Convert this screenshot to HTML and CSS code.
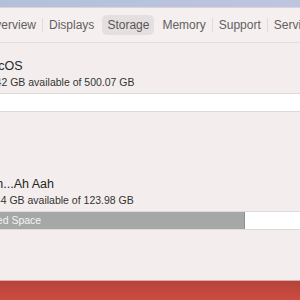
FILE: index.html
```html
<!DOCTYPE html>
<html lang="en">

<head>
  <meta charset="UTF-8" />
  <title>About This Mac - Storage</title>
  <link rel="stylesheet" href="styles.css">
</head>

<body>
  <div class="desktop-top"></div>
  <div class="window">
    <div class="toolbar">
      <ul class="tabs">
        <li class="tab">Overview</li>
        <li class="sep"></li>
        <li class="tab">Displays</li>
        <li class="sep hidden"></li>
        <li class="tab active">Storage</li>
        <li class="sep hidden"></li>
        <li class="tab">Memory</li>
        <li class="sep"></li>
        <li class="tab">Support</li>
        <li class="sep"></li>
        <li class="tab">Service</li>
      </ul>
    </div>
    <main class="content">
      <section class="disk">
        <div class="disk-name">macOS</div>
        <div class="disk-free">18.42 GB available of 500.07 GB</div>
        <div class="bar"></div>
      </section>
      <section class="disk second">
        <div class="disk-name">Shh...Ah Aah</div>
        <div class="disk-free">11.44 GB available of 123.98 GB</div>
        <div class="bar">
          <div class="used" style="width: 264px">Used Space</div>
        </div>
      </section>
    </main>
  </div>
  <div class="desktop-bottom"></div>
</body>

</html>
```

FILE: styles.css
```css
body {
  margin: 0;
  width: 300px;
  height: 300px;
  overflow: hidden;
  font-family: 'Liberation Sans', Arial, sans-serif;
  background: #c0463c;
  display: flex;
  flex-direction: column;
}

.desktop-top {
  height: 7px;
  background: linear-gradient(90deg, #b4bfd9, #bcc6de);
  border-bottom: 1px solid #d9d3dc;
}

.window {
  height: 272px;
  background: #f3eeed;
  display: flex;
  flex-direction: column;
  overflow: hidden;
}

.toolbar {
  height: 34px;
  background: #f5f0ef;
  border-bottom: 1px solid #e3dedd;
  display: flex;
  align-items: center;
}

.tabs {
  list-style: none;
  margin: 0 0 0 -19px;
  padding: 0;
  display: flex;
  align-items: center;
  white-space: nowrap;
}

.tab {
  font-size: 12px;
  color: #626060;
  padding: 0 5px;
  height: 20px;
  line-height: 20px;
  border-radius: 5px;
}

.tab.active {
  background: #e5e0df;
  color: #585656;
}

.sep {
  width: 1px;
  height: 14px;
  margin: 0 1px;
  background: #e2dddc;
}

.sep.hidden {
  background: transparent;
}

.content {
  margin-left: -19px;
  padding-top: 15px;
  width: 420px;
}

.disk-name {
  font-size: 12.5px;
  line-height: 16px;
  color: #262626;
}

.disk-free {
  font-size: 10.5px;
  line-height: 14px;
  color: #333;
  margin-top: 1px;
}

.bar {
  margin-top: 4px;
  height: 17px;
  background: #fff;
  border-top: 1px solid #dedad9;
  border-bottom: 1px solid #dedad9;
  display: flex;
}

.second {
  margin-top: 64px;
}

.used {
  background: #a6a8a7;
  border-right: 1px solid #8f9190;
  color: #f4f4f4;
  font-size: 10.5px;
  line-height: 17px;
  padding-left: 3px;
  box-sizing: border-box;
}

.desktop-bottom {
  flex: 1;
  border-top: 1px solid #e4aaa3;
  background: linear-gradient(180deg, #b2443c, #c4483d 60%, #cb4d40);
}
```
